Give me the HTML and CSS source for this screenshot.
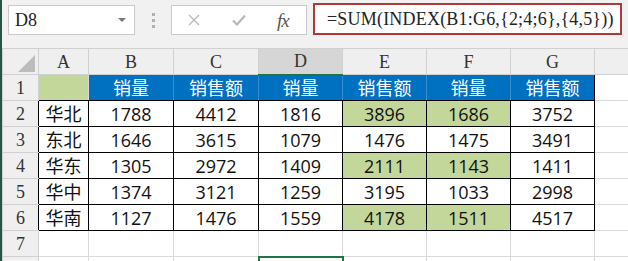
FILE: index.html
```html
<!DOCTYPE html>
<html lang="zh-CN">
<head>
    <meta charset="UTF-8">
    <meta name="viewport" content="width=device-width, initial-scale=1.0">
    <title>INDEX 多区域求和</title>
    <link rel="stylesheet" href="styles.css">
</head>
<body>

<div class="window">

    <!-- Name box + formula bar -->
    <div class="formula-bar">
        <div class="name-box">
            <span class="serif name">D8</span>
            <span class="arrow"></span>
        </div>
        <div class="grip"><i></i><i></i><i></i></div>
        <div class="fx-box">
            <svg class="icon" viewBox="0 0 12 12" width="12" height="12">
                <path d="M1 1 L11 11 M11 1 L1 11" stroke="#b9b9b9" stroke-width="1.3" fill="none"/>
            </svg>
            <svg class="icon" viewBox="0 0 14 12" width="14" height="12">
                <path d="M1 6.5 L5 10.5 L13 1.5" stroke="#b9b9b9" stroke-width="2.2" fill="none"/>
            </svg>
            <span class="fx">fx</span>
        </div>
        <div class="formula">
            <span class="serif code">=SUM(INDEX(B1:G6,{2;4;6},{4,5}))</span>
        </div>
    </div>

    <!-- Sheet -->
    <table class="sheet">
        <colgroup>
            <col style="width:36px">
            <col style="width:50px">
            <col style="width:85px">
            <col style="width:85px">
            <col style="width:84px">
            <col style="width:84px">
            <col style="width:84px">
            <col style="width:84px">
            <col style="width:40px">
        </colgroup>
        <tr class="head">
            <th class="corner"><span class="tri"></span></th>
            <th>A</th><th>B</th><th>C</th><th class="sel">D</th><th>E</th><th>F</th><th>G</th><th></th>
        </tr>
        <tr>
            <th class="rh">1</th>
            <td class="a1"></td>
            <td class="blue">销量</td><td class="blue">销售额</td><td class="blue">销量</td>
            <td class="blue">销售额</td><td class="blue">销量</td><td class="blue last">销售额</td>
            <td></td>
        </tr>
        <tr>
            <th class="rh edge">2</th>
            <td class="k">华北</td><td class="k">1788</td><td class="k">4412</td><td class="k">1816</td>
            <td class="k hl">3896</td><td class="k hl">1686</td><td class="k">3752</td><td></td>
        </tr>
        <tr>
            <th class="rh edge">3</th>
            <td class="k">东北</td><td class="k">1646</td><td class="k">3615</td><td class="k">1079</td>
            <td class="k">1476</td><td class="k">1475</td><td class="k">3491</td><td></td>
        </tr>
        <tr>
            <th class="rh edge">4</th>
            <td class="k">华东</td><td class="k">1305</td><td class="k">2972</td><td class="k">1409</td>
            <td class="k hl">2111</td><td class="k hl">1143</td><td class="k">1411</td><td></td>
        </tr>
        <tr>
            <th class="rh edge">5</th>
            <td class="k">华中</td><td class="k">1374</td><td class="k">3121</td><td class="k">1259</td>
            <td class="k">3195</td><td class="k">1033</td><td class="k">2998</td><td></td>
        </tr>
        <tr>
            <th class="rh edge">6</th>
            <td class="k">华南</td><td class="k">1127</td><td class="k">1476</td><td class="k">1559</td>
            <td class="k hl">4178</td><td class="k hl">1511</td><td class="k">4517</td><td></td>
        </tr>
        <tr>
            <th class="rh">7</th>
            <td></td><td></td><td></td><td></td><td></td><td></td><td></td><td></td>
        </tr>
        <tr>
            <th class="rh"></th>
            <td></td><td></td><td></td><td class="active"></td><td></td><td></td><td></td><td></td>
        </tr>
    </table>

</div>

</body>
</html>
```

FILE: styles.css
```css
* { margin: 0; padding: 0; box-sizing: border-box; }
body { background: #fff; width: 628px; height: 261px; overflow: hidden; }
.window {
    width: 628px; height: 261px; overflow: hidden;
    border-left: 2px solid #24573f; background: #f1f1f1;
}

/* Formula bar */
.formula-bar { height: 48px; display: flex; align-items: flex-start; padding: 5px 0 0 6px; }
.name-box {
    width: 127px; height: 30px; background: #fff; border: 1px solid #c9c9c9;
    display: flex; align-items: center; padding-left: 6px; overflow: hidden;
}
.arrow {
    margin-left: auto; margin-right: 8px; width: 0; height: 0;
    border-left: 4px solid transparent; border-right: 4px solid transparent; border-top: 4px solid #7a7a7a;
}
.grip { margin: 8px 0 0 17px; display: flex; flex-direction: column; gap: 3px; }
.grip i { display: block; width: 3px; height: 3px; background: #b0b0b0; }
.fx-box {
    margin-left: 16px; width: 136px; height: 30px; background: #fff; border: 1px solid #c9c9c9;
    display: flex; align-items: center; gap: 32px; padding-left: 16px;
}
.fx-box .icon { display: block; }
.fx {
    font-family: "Liberation Serif", serif; font-style: italic; font-size: 19px;
    color: #555; line-height: 1; margin-left: -1px; letter-spacing: -1px;
}
.formula {
    margin: -2px 0 0 6px; width: 309px; height: 32px; background: #fff;
    border: 2px solid #b03838; display: flex; align-items: center; padding-left: 12px; overflow: hidden;
}
.serif { font-family: "Liberation Serif", serif; color: #222; line-height: 1; white-space: nowrap; }
.serif.name { font-size: 18px; }
.serif.code { font-size: 18px; letter-spacing: 0.2px; }

/* Sheet grid */
.sheet { border-collapse: collapse; table-layout: fixed; width: 632px; background: #fff; }
.sheet tr { height: 26px; }
.sheet th {
    background: #efefef; border: 1px solid #d0d0d0; font-weight: normal;
    font-family: "Liberation Serif", serif; font-size: 18px; color: #333; line-height: 1;
}
.sheet th.sel { background: #d6d6d6; border-bottom: 2px solid #217346; }
.sheet th.corner { vertical-align: bottom; padding: 0 3px 2px 0; }
.tri {
    display: block; width: 17px; height: 17px; margin-left: auto; background: #bcbcbc;
    clip-path: polygon(100% 0, 100% 100%, 0 100%);
}
.sheet th.edge { border-right-color: #000; }
.sheet td {
    border: 1px solid #dadada; text-align: center; color: #111;
    font-family: "Open Sans", "Noto Sans CJK SC", sans-serif; font-size: 18px; line-height: 1;
    white-space: nowrap; overflow: hidden;
}
.sheet td.a1 { background: #c4d79b; border-bottom-color: #000; }
.sheet td.blue {
    background: #0070c0; color: #fff; border-color: #3b8bd0; border-bottom-color: #000;
}
.sheet td.blue.last { border-right-color: #000; }
.sheet td.k { border-color: #000; }
.sheet td.hl { background: #c4d79b; }
.sheet td.active { border: 2px solid #217346; }
```
